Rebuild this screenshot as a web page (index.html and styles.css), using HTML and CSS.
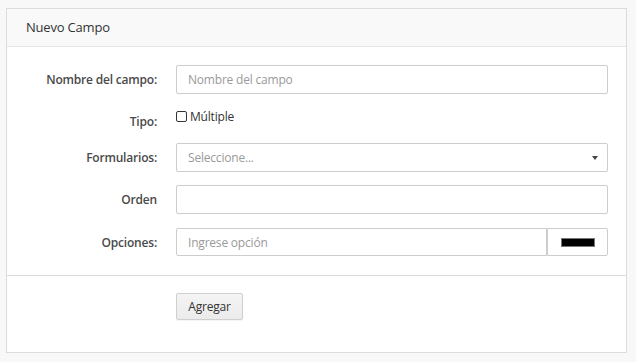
FILE: index.html
```html
<!DOCTYPE html>
<html lang="es">
<head>
<meta charset="utf-8">
<title>Nuevo Campo</title>
<link rel="stylesheet" href="styles.css">
</head>
<body>
<div class="panel">
  <div class="panel-heading">Nuevo Campo</div>
  <div class="panel-body">
    <label class="lbl">Nombre del campo:</label>
    <input class="ctrl" type="text" placeholder="Nombre del campo">

    <label class="lbl lbl-tipo">Tipo:</label>
    <label class="check"><input type="checkbox" class="cb"><span>Múltiple</span></label>

    <label class="lbl">Formularios:</label>
    <div class="ctrl select"><span class="ph">Seleccione...</span><span class="caret"></span></div>

    <label class="lbl">Orden</label>
    <input class="ctrl" type="text">

    <label class="lbl">Opciones:</label>
    <div class="group">
      <input class="ctrl grow" type="text" placeholder="Ingrese opción">
      <div class="color"><span class="swatch"></span></div>
    </div>
  </div>
  <div class="panel-footer">
    <button class="btn" type="button">Agregar</button>
  </div>
</div>
</body>
</html>
```

FILE: styles.css
```css
* { box-sizing: border-box; }
html, body { margin: 0; padding: 0; }
body {
  background: #f8f8f8;
  font-family: "Open Sans", "Noto Sans", sans-serif;
  font-size: 12px;
  letter-spacing: -0.2px;
  color: #333;
}
.panel {
  margin: 8px 0 0 6px;
  width: 621px;
  height: 345px;
  background: #fff;
  border: 1px solid #dcdcdc;
  display: flex;
  flex-direction: column;
}
.panel-heading {
  height: 38px;
  line-height: 37px;
  padding-left: 19px;
  background: #f9f9f9;
  border-bottom: 1px solid #e6e6e6;
  font-size: 13px;
  color: #333;
}
.panel-body {
  display: grid;
  grid-template-columns: 150px 432px;
  grid-template-rows: 29px 21px 28px 29px 28px;
  column-gap: 19px;
  row-gap: 14px;
  padding: 18px 17px 19px 0;
  border-bottom: 1px solid #dcdcdc;
  align-items: start;
}
.lbl {
  align-self: center;
  text-align: right;
  font-weight: 600;
  color: #4a4a4a;
  font-size: 12px;
}
.lbl-tipo { align-self: start; padding-top: 5px; }
.ctrl {
  height: 29px;
  border: 1px solid #cdcdcd;
  border-radius: 2px;
  padding: 0 11px;
  font-family: inherit;
  font-size: 12px;
  letter-spacing: -0.2px;
  color: #555;
  background: #fff;
  width: 100%;
  outline: none;
}
.ctrl::placeholder { color: #9a9a9a; }
.check {
  display: flex;
  align-items: center;
  height: 21px;
  margin-top: -2px;
}
.check span { margin-left: 3px; color: #333; font-size: 12px; }
.cb {
  appearance: none;
  -webkit-appearance: none;
  width: 11px;
  height: 11px;
  margin: 0;
  border: 1px solid #333;
  border-radius: 2px;
  background: #fff;
}
.select {
  display: flex;
  align-items: center;
  justify-content: space-between;
  padding-right: 9px;
}
.ph { color: #9a9a9a; }
.caret {
  width: 0; height: 0;
  border-left: 3px solid transparent;
  border-right: 3px solid transparent;
  border-top: 4px solid #444;
}
.group { display: flex; height: 28px; }
.group .ctrl { height: 28px; }
.grow { flex: 1; border-radius: 2px 0 0 2px; }
.color {
  width: 61px;
  height: 28px;
  border: 1px solid #cdcdcd;
  border-radius: 0 2px 2px 0;
  display: flex;
  align-items: center;
  justify-content: center;
}
.swatch {
  width: 34px;
  height: 9px;
  background: #000;
  border: 1px solid #777;
}
.panel-footer {
  padding: 17px 0 0 169px;
}
.btn {
  height: 27px;
  width: 67px;
  padding: 0;
  font-family: inherit;
  font-size: 12px;
  letter-spacing: -0.2px;
  color: #333;
  background: linear-gradient(#f4f4f4, #ebebeb);
  border: 1px solid #cfcfcf;
  border-radius: 2px;
  box-shadow: 0 1px 1px rgba(0,0,0,0.05);
}
```
